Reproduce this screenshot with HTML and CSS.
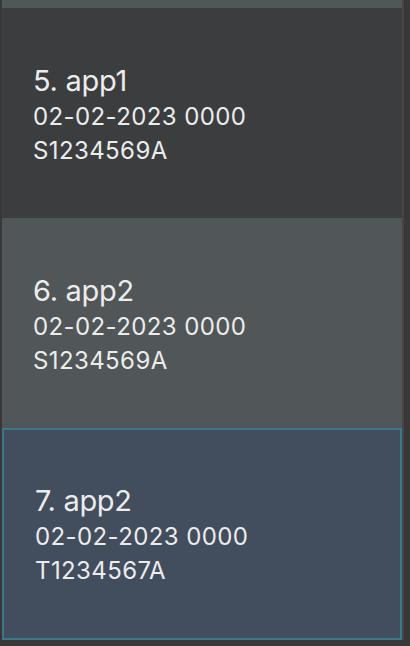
FILE: index.html
```html
<!DOCTYPE html>
<html>
<head>
<meta charset="utf-8">
<link rel="stylesheet" href="styles.css">
</head>
<body>
<div class="frame">
  <div class="list">
    <div class="cell cell-grey cell-stub"></div>
    <div class="cell cell-dark">
      <div class="title">5. app1</div>
      <div class="line">02-02-2023 0000</div>
      <div class="line">S1234569A</div>
    </div>
    <div class="cell cell-grey">
      <div class="title">6. app2</div>
      <div class="line">02-02-2023 0000</div>
      <div class="line">S1234569A</div>
    </div>
    <div class="cell cell-selected">
      <div class="title">7. app2</div>
      <div class="line">02-02-2023 0000</div>
      <div class="line">T1234567A</div>
    </div>
  </div>
  <div class="scrollbar"></div>
</div>
</body>
</html>
```
FILE: styles.css
```css
* { box-sizing: border-box; }
html, body {
  margin: 0;
  padding: 0;
  background: #383838;
  width: 410px;
  height: 646px;
  overflow: hidden;
}
.frame {
  display: flex;
  height: 646px;
  padding-left: 2px;
}
.list {
  width: 400px;
  display: flex;
  flex-direction: column;
}
.scrollbar {
  width: 2px;
  background: #464646;
  height: 640px;
}
.cell {
  height: 210px;
  padding: 54px 0 0 31px;
  font-family: Inter, "Liberation Sans", sans-serif;
  color: #ececec;
  flex: none;
}
.cell-stub { height: 8px; padding: 0; }
.cell-dark { background: #3c3d3f; }
.cell-grey { background: #515658; }
.cell-selected {
  background: #424d5d;
  border: 2px solid #3b7889;
  height: 212px;
  padding: 52px 0 0 31px;
}
.title {
  font-size: 29px;
  line-height: 38px;
  letter-spacing: -0.3px;
}
.line {
  font-size: 24px;
  line-height: 34px;
  letter-spacing: 0.4px;
}
```
